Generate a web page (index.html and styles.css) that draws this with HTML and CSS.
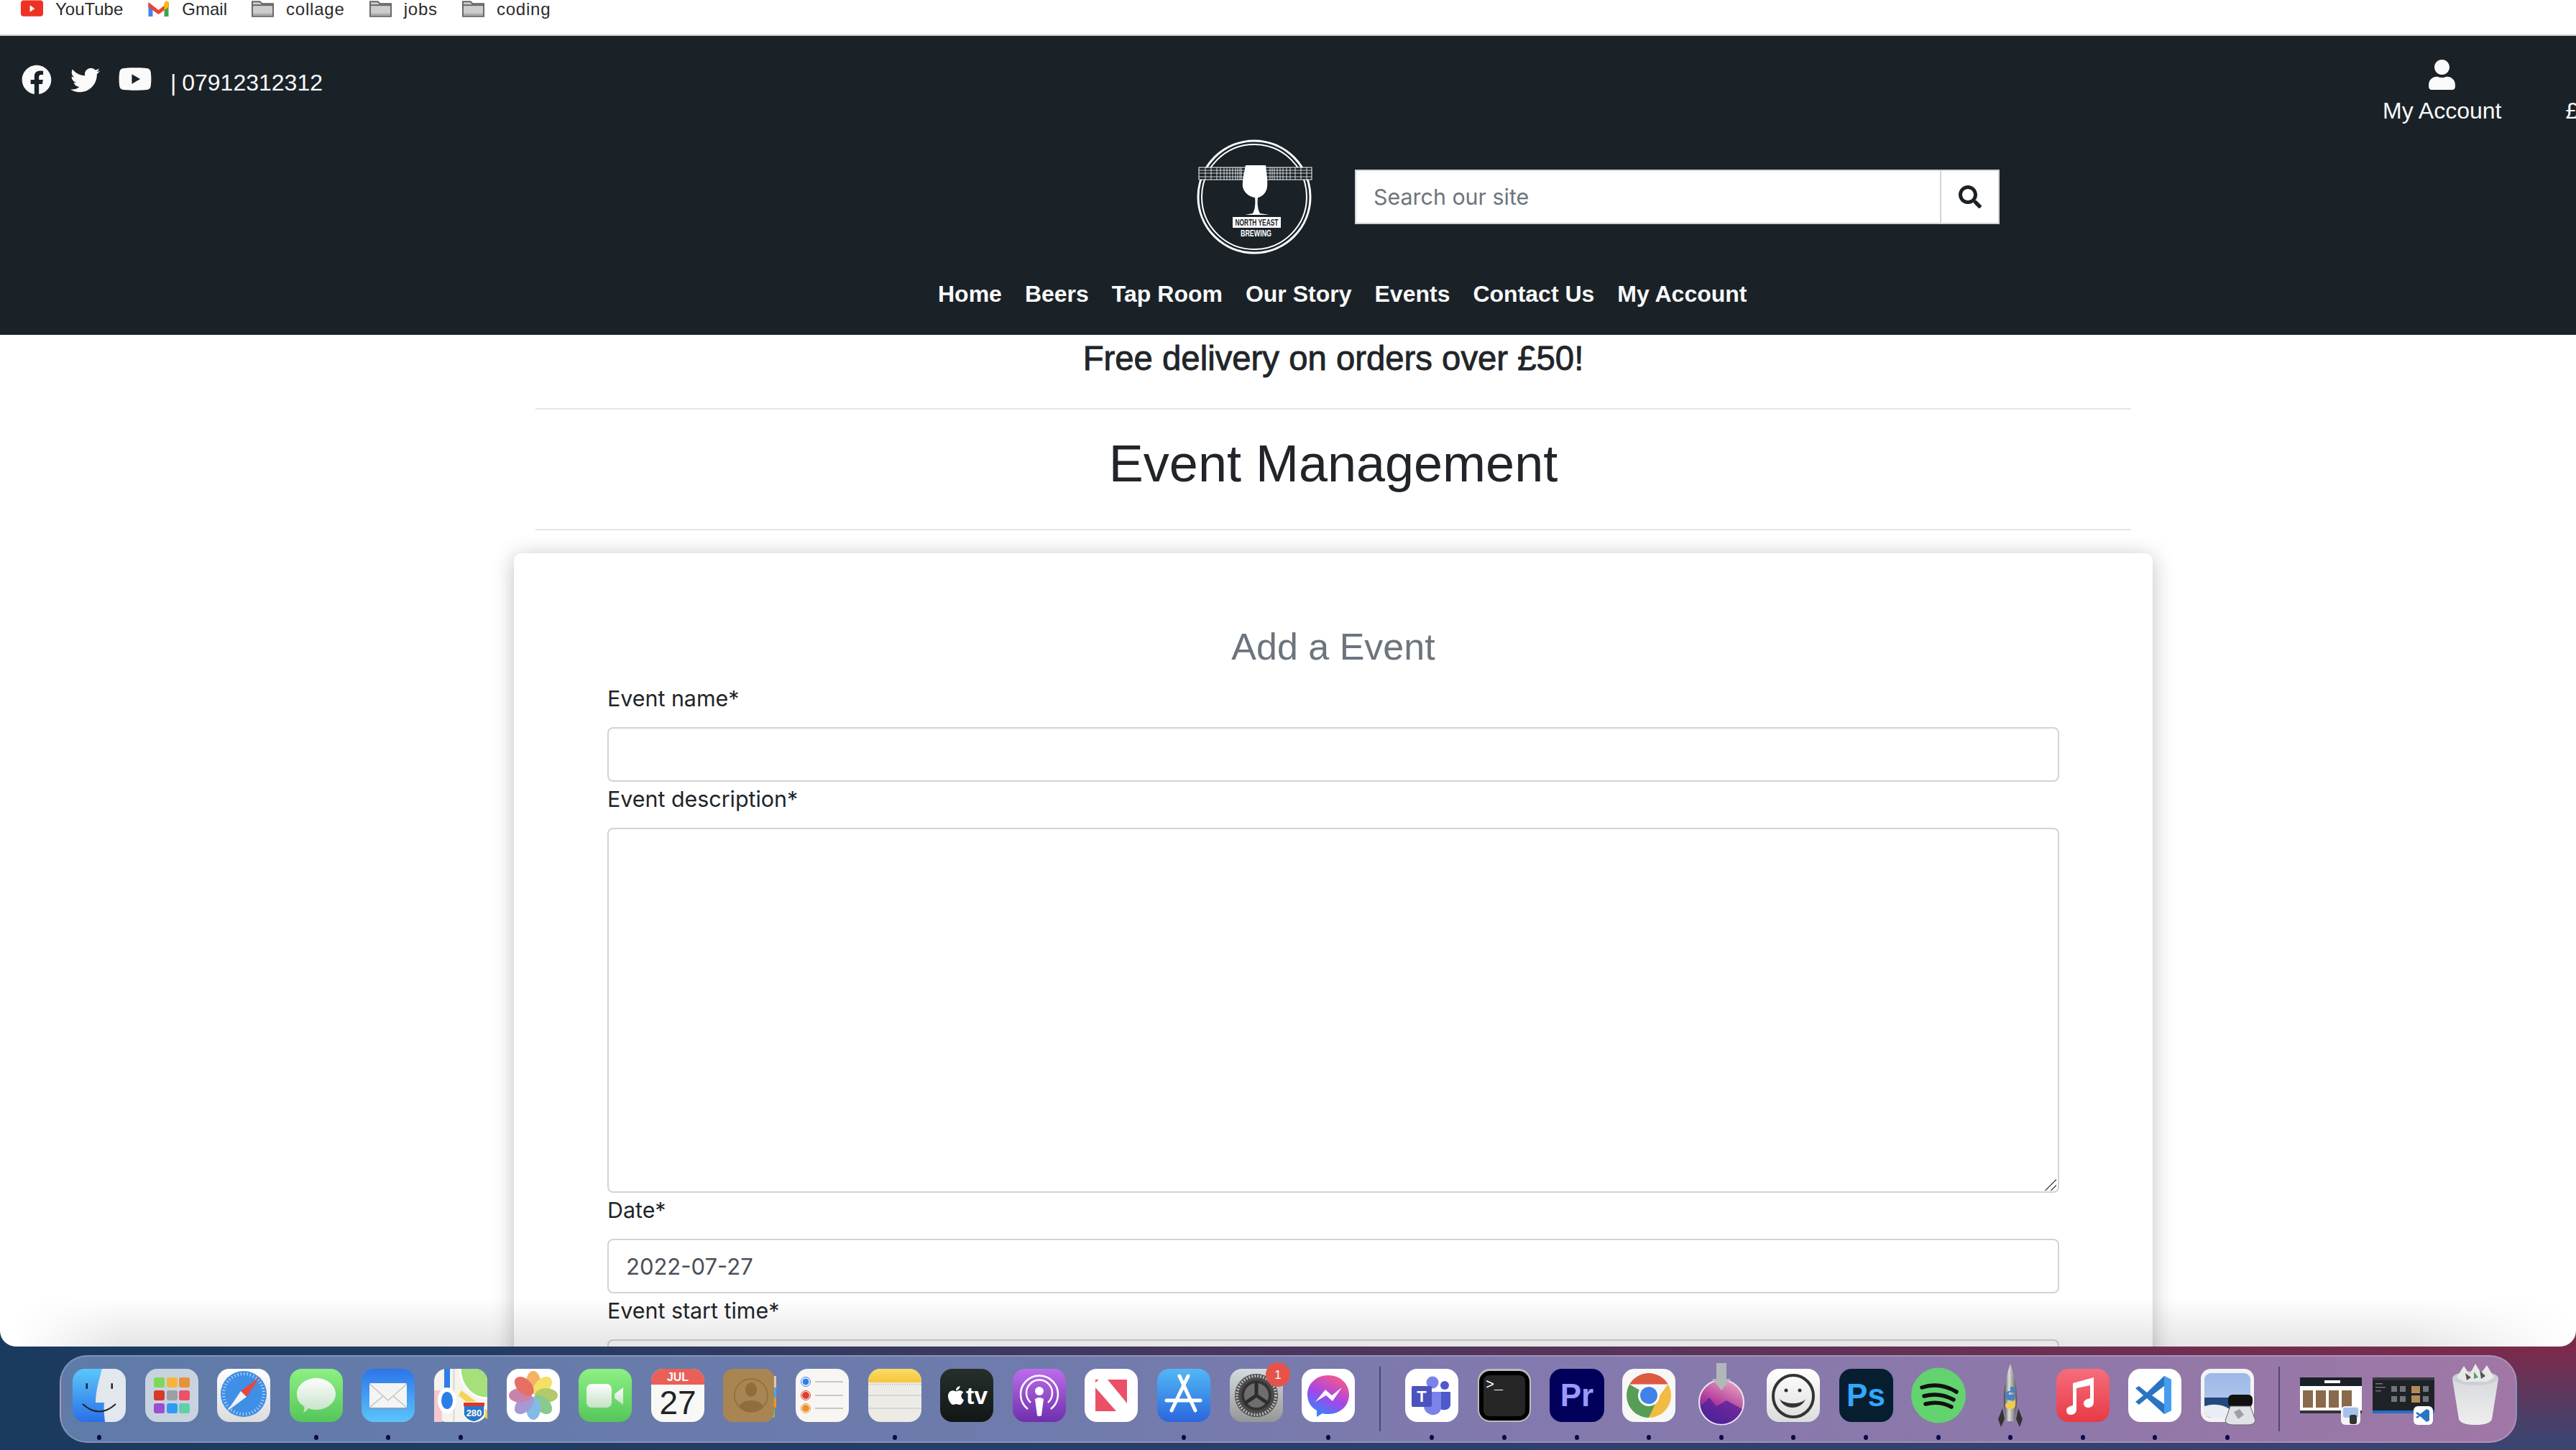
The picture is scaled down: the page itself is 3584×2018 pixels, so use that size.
FILE: index.html
```html
<!DOCTYPE html>
<html lang="en">
<head>
  <meta charset="UTF-8">
  <meta name="viewport" content="width=device-width, initial-scale=1.0">
  <title>Event Management</title>
  <link rel="stylesheet" href="styles.css">
</head>
<body>
  <svg class="svg-defs" aria-hidden="true">
    <defs>
      <linearGradient id="g-finder" x1="0" y1="0" x2="0" y2="1"><stop offset="0" stop-color="#5ac8fa"/><stop offset="1" stop-color="#2a6fe8"/></linearGradient>
      <linearGradient id="g-green" x1="0" y1="0" x2="0" y2="1"><stop offset="0" stop-color="#8df082"/><stop offset="1" stop-color="#55c65a"/></linearGradient>
      <linearGradient id="g-bubble" x1="0" y1="0" x2="0" y2="1"><stop offset="0" stop-color="#fdfdfd"/><stop offset="1" stop-color="#c4e2c6"/></linearGradient>
      <linearGradient id="g-mail" x1="0" y1="0" x2="0" y2="1"><stop offset="0" stop-color="#2d74ea"/><stop offset="1" stop-color="#5bc5fa"/></linearGradient>
      <linearGradient id="g-silver" x1="0" y1="0" x2="0" y2="1"><stop offset="0" stop-color="#fff"/><stop offset="1" stop-color="#dcdcdc"/></linearGradient>
      <linearGradient id="g-tv" x1="0" y1="0" x2="0" y2="1"><stop offset="0" stop-color="#262f2c"/><stop offset="1" stop-color="#121716"/></linearGradient>
      <linearGradient id="g-pod" x1="0" y1="0" x2="0" y2="1"><stop offset="0" stop-color="#bb6dea"/><stop offset="1" stop-color="#6f2fae"/></linearGradient>
      <linearGradient id="g-store" x1="0" y1="0" x2="0" y2="1"><stop offset="0" stop-color="#52b8f5"/><stop offset="1" stop-color="#2a66dc"/></linearGradient>
      <linearGradient id="g-prefs" x1="0" y1="0" x2="0" y2="1"><stop offset="0" stop-color="#d4dcde"/><stop offset="1" stop-color="#969696"/></linearGradient>
      <linearGradient id="g-msgr" x1="0.7" y1="0" x2="0.2" y2="1"><stop offset="0" stop-color="#f7598a"/><stop offset="0.5" stop-color="#a546e8"/><stop offset="1" stop-color="#2a8cff"/></linearGradient>
      <linearGradient id="g-mont" x1="0.7" y1="0" x2="0.2" y2="1"><stop offset="0" stop-color="#e6a0c0"/><stop offset="0.55" stop-color="#b0389a"/><stop offset="1" stop-color="#3a2a9c"/></linearGradient>
      <linearGradient id="g-music" x1="0" y1="0" x2="0" y2="1"><stop offset="0" stop-color="#f76d7c"/><stop offset="1" stop-color="#e73a46"/></linearGradient>
      <linearGradient id="g-rocket" x1="0" y1="0" x2="1" y2="0"><stop offset="0" stop-color="#444"/><stop offset="0.4" stop-color="#ddd"/><stop offset="1" stop-color="#555"/></linearGradient>
      <linearGradient id="g-notes" x1="0" y1="0" x2="0" y2="1"><stop offset="0" stop-color="#fbdc66"/><stop offset="1" stop-color="#f5c63a"/></linearGradient>
      <linearGradient id="g-sky" x1="0" y1="0" x2="0" y2="1"><stop offset="0" stop-color="#9cb8e8"/><stop offset="1" stop-color="#b6cdee"/></linearGradient>
      <linearGradient id="g-trash" x1="0" y1="0" x2="0" y2="1"><stop offset="0" stop-color="#d8dade"/><stop offset="1" stop-color="#eeeeee"/></linearGradient>
    </defs>
  </svg>

  <div class="window">
    <div class="bookmarks">
      <a class="bookmark">
        <svg class="bm-icon" viewBox="0 0 32 24"><rect width="32" height="23" y="0" rx="4" fill="#ee3124"/><path d="M13 7l7 5-7 5z" fill="#fff"/></svg>
        YouTube
      </a>
      <a class="bookmark">
        <svg class="bm-icon" viewBox="0 0 30 24"><path d="M1 4v19h6V10z" fill="#4285f4"/><path d="M29 4v19h-6V10z" fill="#34a853"/><path d="M1 3l14 11L29 3v7L15 20 1 10z" fill="#ea4335"/><path d="M23 4l3-3 3 2v7l-6 4z" fill="#fbbc04"/></svg>
        Gmail
      </a>
      <a class="bookmark folder">
        <svg class="bm-icon" viewBox="0 0 32 24"><path d="M1 23V2h11l3 3h16v18z" fill="#cdcdcd" stroke="#666" stroke-width="2"/><path d="M1 7h30" stroke="#666" stroke-width="2"/><path d="M2 19h28v3H2z" fill="#aaa"/></svg>
        collage
      </a>
      <a class="bookmark folder">
        <svg class="bm-icon" viewBox="0 0 32 24"><path d="M1 23V2h11l3 3h16v18z" fill="#cdcdcd" stroke="#666" stroke-width="2"/><path d="M1 7h30" stroke="#666" stroke-width="2"/><path d="M2 19h28v3H2z" fill="#aaa"/></svg>
        jobs
      </a>
      <a class="bookmark folder">
        <svg class="bm-icon" viewBox="0 0 32 24"><path d="M1 23V2h11l3 3h16v18z" fill="#cdcdcd" stroke="#666" stroke-width="2"/><path d="M1 7h30" stroke="#666" stroke-width="2"/><path d="M2 19h28v3H2z" fill="#aaa"/></svg>
        coding
      </a>
    </div>

    <header class="site-header">
      <div class="header-top">
        <div class="contact">
          <svg class="social fb" viewBox="0 0 512 512"><path d="M504 256C504 119 393 8 256 8S8 119 8 256c0 123.78 90.69 226.38 209.25 245V327.69h-63V256h63v-54.64c0-62.15 37-96.48 93.67-96.48 27.14 0 55.52 4.84 55.52 4.84v61h-31.28c-30.8 0-40.41 19.12-40.41 38.73V256h68.78l-11 71.69h-57.78V501C413.31 482.38 504 379.78 504 256z"/></svg>
          <svg class="social tw" viewBox="0 0 512 512"><path d="M459.37 151.716c.325 4.548.325 9.097.325 13.645 0 138.72-105.583 298.558-298.558 298.558-59.452 0-114.68-17.219-161.137-47.106 8.447.974 16.568 1.299 25.34 1.299 49.055 0 94.213-16.568 130.274-44.832-46.132-.975-84.792-31.188-98.112-72.772 6.498.974 12.995 1.624 19.818 1.624 9.421 0 18.843-1.3 27.614-3.573-48.081-9.747-84.143-51.98-84.143-102.985v-1.299c13.969 7.797 30.214 12.67 47.431 13.319-28.264-18.843-46.781-51.005-46.781-87.391 0-19.492 5.197-37.36 14.294-52.954 51.655 63.675 129.3 105.258 216.365 109.807-1.624-7.797-2.599-15.918-2.599-24.04 0-57.828 46.782-104.934 104.934-104.934 30.213 0 57.502 12.67 76.67 33.137 23.715-4.548 46.456-13.32 66.599-25.34-7.798 24.366-24.366 44.833-46.132 57.827 21.117-2.273 41.584-8.122 60.426-16.243-14.292 20.791-32.161 39.308-52.628 54.253z"/></svg>
          <svg class="social yt" viewBox="0 0 576 512"><path d="M549.655 124.083c-6.281-23.65-24.787-42.276-48.284-48.597C458.781 64 288 64 288 64S117.22 64 74.629 75.486c-23.497 6.322-42.003 24.947-48.284 48.597-11.412 42.867-11.412 132.305-11.412 132.305s0 89.438 11.412 132.305c6.281 23.65 24.787 41.5 48.284 47.821C117.22 448 288 448 288 448s170.78 0 213.371-11.486c23.497-6.321 42.003-24.171 48.284-47.821 11.412-42.867 11.412-132.305 11.412-132.305s0-89.438-11.412-132.305zm-317.51 213.508V175.185l142.739 81.205-142.739 81.201z"/></svg>
          <span class="phone">| 07912312312</span>
        </div>
        <div class="account-links">
          <a class="account">
            <svg class="user-icon" viewBox="0 0 448 512"><path d="M224 256c70.7 0 128-57.3 128-128S294.7 0 224 0 96 57.3 96 128s57.3 128 128 128zm89.6 32h-16.7c-22.2 10.2-46.9 16-72.9 16s-50.6-5.8-72.9-16h-16.7C60.2 288 0 348.2 0 422.4V464c0 26.5 21.5 48 48 48h352c26.5 0 48-21.5 48-48v-41.6c0-74.2-60.2-134.4-134.4-134.4z"/></svg>
            My Account
          </a>
          <span class="basket">£0.00</span>
        </div>
      </div>

      <div class="header-mid">
        <svg class="logo" viewBox="0 0 160 160">
          <circle cx="80" cy="80" r="78" fill="none" stroke="#fff" stroke-width="3"/>
          <circle cx="80" cy="80" r="73" fill="none" stroke="#fff" stroke-width="2"/>
          <rect x="3" y="39" width="157" height="17" fill="#1a2228" stroke="#fff" stroke-width="1"/>
          <path d="M12 39V56M20 39V56M28 39V56M33 39V56M38 39V56M42 39V56M46 39V56M50 39V56M54 39V56M57 39V56M60 39V56M62 39V56M102 39V56M105 39V56M108 39V56M112 39V56M116 39V56M120 39V56M125 39V56M130 39V56M137 39V56M145 39V56M153 39V56M3 43H66M3 47H66M3 52H66M97 43H160M97 47H160M97 52H160" stroke="#fff" stroke-width="0.8" fill="none"/>
          <path d="M68 36H96C97 46 99 56 98 66C97 75 90 80 85 81C84 90 85 98 88 103L101 105H67L78 103C81 98 82 90 81 81C74 80 66 75 64 66C63 56 66 46 68 36Z" fill="#fff"/>
          <rect x="50" y="108" width="67" height="15" fill="#fff"/>
          <text class="logo-name" x="83.5" y="120" text-anchor="middle" textLength="60" lengthAdjust="spacingAndGlyphs">NORTH YEAST</text>
          <text class="logo-sub" x="82.5" y="135" text-anchor="middle" textLength="43" lengthAdjust="spacingAndGlyphs">BREWING</text>
        </svg>
        <form class="search">
          <input class="search-input" type="text" placeholder="Search our site">
          <button class="search-btn" type="button">
            <svg viewBox="0 0 512 512"><path d="M505 442.7L405.3 343c-4.5-4.5-10.6-7-17-7H372c27.6-35.3 44-79.7 44-128C416 93.1 322.9 0 208 0S0 93.1 0 208s93.1 208 208 208c48.3 0 92.7-16.4 128-44v16.3c0 6.4 2.5 12.5 7 17l99.7 99.7c9.4 9.4 24.6 9.4 33.9 0l28.3-28.3c9.4-9.4 9.4-24.6.1-34zM208 336c-70.7 0-128-57.2-128-128 0-70.7 57.2-128 128-128 70.7 0 128 57.2 128 128 0 70.7-57.2 128-128 128z"/></svg>
          </button>
        </form>
      </div>

      <nav class="main-nav">
        <a>Home</a>
        <a>Beers</a>
        <a>Tap Room</a>
        <a>Our Story</a>
        <a>Events</a>
        <a>Contact Us</a>
        <a>My Account</a>
      </nav>
    </header>

    <main class="content">
      <p class="promo">Free delivery on orders over £50!</p>
      <hr class="rule">
      <h1 class="page-title">Event Management</h1>
      <hr class="rule rule-bottom">
      <section class="card">
        <h2 class="card-title">Add a Event</h2>
        <form class="event-form">
          <label class="field-label">Event name*</label>
          <input class="field" type="text">
          <label class="field-label">Event description*</label>
          <textarea class="field field-area"></textarea>
          <label class="field-label">Date*</label>
          <input class="field" type="text" value="2022-07-27">
          <label class="field-label">Event start time*</label>
          <input class="field" type="text">
        </form>
      </section>
    </main>
  </div>

  <div class="dock">
    <div class="dock-item">
      <svg class="app" viewBox="0 0 74 74"><rect width="74" height="74" rx="17" fill="url(#g-finder)"/><path d="M41 0H57A17 17 0 0 1 74 17V57A17 17 0 0 1 57 74H45C44 64 43 56 44 47H32C32 31 37 15 41 0Z" fill="#e3e7ee"/><rect x="18.5" y="20" width="2.5" height="8" rx="1" fill="#222"/><rect x="53.5" y="20" width="2.5" height="8" rx="1" fill="#222"/><path d="M14 49Q37 70 60 49" fill="none" stroke="#222" stroke-width="2"/></svg>
      <span class="dot"></span>
    </div>
    <div class="dock-item">
      <svg class="app" viewBox="0 0 74 74"><rect width="74" height="74" rx="17" fill="#c9d3e0"/>
        <rect x="12" y="12" width="15" height="14" rx="3" fill="#7ed957"/><rect x="30" y="12" width="15" height="14" rx="3" fill="#f5b53a"/><rect x="47" y="12" width="15" height="14" rx="3" fill="#e8913a"/>
        <rect x="12" y="30" width="15" height="14" rx="3" fill="#d8392b"/><rect x="30" y="30" width="15" height="14" rx="3" fill="#9aa0a5"/><rect x="47" y="30" width="15" height="14" rx="3" fill="#ef5068"/>
        <rect x="12" y="48" width="15" height="14" rx="3" fill="#9a4fd0"/><rect x="30" y="48" width="15" height="14" rx="3" fill="#2f9bf5"/><rect x="47" y="48" width="15" height="14" rx="3" fill="#5fd0a8"/>
      </svg>
    </div>
    <div class="dock-item">
      <svg class="app" viewBox="0 0 74 74"><rect width="74" height="74" rx="17" fill="url(#g-silver)"/><circle cx="37" cy="35" r="32" fill="#3f8fe6"/><circle cx="37" cy="35" r="28" fill="none" stroke="#fff" stroke-width="4" stroke-dasharray="1 3.4" opacity="0.8"/><path d="M60 11L33 31 41 39Z" fill="#e8483a"/><path d="M14 59L33 31 41 39Z" fill="#f2f2f2"/></svg>
    </div>
    <div class="dock-item">
      <svg class="app" viewBox="0 0 74 74"><rect width="74" height="74" rx="17" fill="url(#g-green)"/><path d="M37 13C52 13 64 23 64 35C64 47 52 57 37 57C33 57 29 56 26 55C24 58 21 60 19 61C20 58 21 55 20 52C13 48 10 42 10 35C10 23 22 13 37 13Z" fill="url(#g-bubble)"/></svg>
      <span class="dot"></span>
    </div>
    <div class="dock-item">
      <svg class="app" viewBox="0 0 74 74"><rect width="74" height="74" rx="17" fill="url(#g-mail)"/><rect x="11" y="20" width="52" height="34" rx="2" fill="#f4f4f4"/><path d="M11 21L37 44 63 21M11 54L30 38M63 54L44 38" fill="none" stroke="#bcbcbc" stroke-width="1.2"/><rect x="11" y="54" width="52" height="2" fill="#7fa0c8"/></svg>
      <span class="dot"></span>
    </div>
    <div class="dock-item">
      <svg class="app" viewBox="0 0 74 74"><rect width="74" height="74" rx="17" fill="#f5f3ec"/><path d="M36 0H57A17 17 0 0 1 74 17V41C52 41 37 24 36 0Z" fill="#a5e07a"/><path d="M36 0C37 24 52 41 74 41" fill="none" stroke="#fff" stroke-width="3"/><path d="M0 30H11V74H0Z" fill="#f6c7cf"/><path d="M14 0H22V36H14Z" fill="#2b7de9"/><path d="M34 37L74 70V58L38 30Z" fill="#f7d257"/><rect x="26" y="0" width="3" height="74" fill="#e0e0e0"/><ellipse cx="18" cy="44" rx="13" ry="18" fill="#fff"/><ellipse cx="18" cy="44" rx="8" ry="12" fill="#2b7de9"/><path d="M41 47H70V64C66 70 60 73 55.5 74C50 73 44 70 41 64Z" fill="#2a76c9" stroke="#fff" stroke-width="1.5"/><rect x="41" y="47" width="29" height="5" fill="#d8392b"/><text class="map-num" x="55.5" y="66" text-anchor="middle">280</text></svg>
      <span class="dot"></span>
    </div>
    <div class="dock-item">
      <svg class="app" viewBox="0 0 74 74"><rect width="74" height="74" rx="17" fill="#fff"/>
        <g opacity="0.75"><ellipse cx="37" cy="19" rx="10" ry="16" fill="#f4972e"/><ellipse cx="37" cy="19" rx="10" ry="16" fill="#f0d832" transform="rotate(45 37 37)"/><ellipse cx="37" cy="19" rx="10" ry="16" fill="#9ab83a" transform="rotate(90 37 37)"/><ellipse cx="37" cy="19" rx="10" ry="16" fill="#62b86a" transform="rotate(135 37 37)"/><ellipse cx="37" cy="19" rx="10" ry="16" fill="#5aa5e0" transform="rotate(180 37 37)"/><ellipse cx="37" cy="19" rx="10" ry="16" fill="#8a78c8" transform="rotate(225 37 37)"/><ellipse cx="37" cy="19" rx="10" ry="16" fill="#b85a90" transform="rotate(270 37 37)"/><ellipse cx="37" cy="19" rx="10" ry="16" fill="#e0402e" transform="rotate(315 37 37)"/></g>
      </svg>
    </div>
    <div class="dock-item">
      <svg class="app" viewBox="0 0 74 74"><rect width="74" height="74" rx="17" fill="url(#g-green)"/><rect x="11" y="21" width="35" height="33" rx="7" fill="url(#g-bubble)"/><path d="M50 35L62 26V50L50 41Z" fill="url(#g-bubble)"/></svg>
    </div>
    <div class="dock-item">
      <svg class="app" viewBox="0 0 74 74"><rect width="74" height="74" rx="17" fill="#f8f8f6"/><path d="M0 22V17A17 17 0 0 1 17 0H57A17 17 0 0 1 74 17V22Z" fill="#ea5f57"/><text class="cal-month" x="37" y="16.5" text-anchor="middle">JUL</text><text class="cal-day" x="37" y="63" text-anchor="middle">27</text></svg>
    </div>
    <div class="dock-item">
      <svg class="app" viewBox="0 0 74 74"><rect x="60" y="10" width="14" height="16" fill="#d9cdb0"/><rect x="60" y="26" width="14" height="14" fill="#49a6ea"/><rect x="60" y="40" width="14" height="14" fill="#ee9431"/><rect x="60" y="54" width="12" height="14" rx="3" fill="#6ecf68"/><rect width="71" height="74" rx="14" fill="#a98552"/><circle cx="39" cy="37" r="23" fill="none" stroke="#8e6d3f" stroke-width="1.5"/><ellipse cx="39" cy="29" rx="8" ry="10" fill="#8e6d3f"/><path d="M22 53C26 41 52 41 56 53C50 62 28 62 22 53Z" fill="#8e6d3f"/></svg>
    </div>
    <div class="dock-item">
      <svg class="app" viewBox="0 0 74 74"><rect width="74" height="74" rx="17" fill="#f7f6f3"/><circle cx="14" cy="18" r="5" fill="#2f7fe8" stroke="#fff" stroke-width="1"/><circle cx="14" cy="18" r="6.5" fill="none" stroke="#2f7fe8"/><circle cx="14" cy="37" r="5" fill="#e03c30"/><circle cx="14" cy="37" r="6.5" fill="none" stroke="#e03c30"/><circle cx="14" cy="55" r="5" fill="#e8912e"/><circle cx="14" cy="55" r="6.5" fill="none" stroke="#e8912e"/><path d="M27 18H66M27 37H66M27 55H66" stroke="#b8b8b8" stroke-width="1.5"/></svg>
    </div>
    <div class="dock-item">
      <svg class="app" viewBox="0 0 74 74"><rect width="74" height="74" rx="17" fill="#ecebe5"/><path d="M0 19V17A17 17 0 0 1 17 0H57A17 17 0 0 1 74 17V19Z" fill="url(#g-notes)"/><path d="M0 21.5H74" stroke="#a9a9a2" stroke-width="1.5" stroke-dasharray="1 2"/><path d="M0 37H74M0 55H74" stroke="#d2d1cb" stroke-width="1.5"/></svg>
      <span class="dot"></span>
    </div>
    <div class="dock-item">
      <svg class="app" viewBox="0 0 74 74"><rect width="74" height="74" rx="17" fill="url(#g-tv)"/><svg x="10" y="22" width="24" height="30" viewBox="0 0 384 512" fill="#fff"><path d="M318.7 268.7c-.2-36.7 16.4-64.4 50-84.8-18.8-26.9-47.2-41.7-84.7-44.6-35.5-2.8-74.3 20.7-88.5 20.7-15 0-49.4-19.7-76.4-19.7C63.3 141.2 4 184.8 4 273.5q0 39.3 14.4 81.2c12.8 36.7 59 126.7 107.2 125.2 25.2-.6 43-17.9 75.8-17.9 31.8 0 48.3 17.9 76.4 17.9 48.6-.7 90.4-82.5 102.6-119.3-65.2-30.7-61.7-90-61.7-91.9zm-56.6-164.2c27.3-32.4 24.8-61.9 24-72.5-24.1 1.4-52 16.4-67.9 34.9-17.5 19.8-27.8 44.3-25.5 71.9 26.1 2 49.9-11.4 69.4-34.3z"/></svg><text class="tv-text" x="36" y="49">tv</text></svg>
    </div>
    <div class="dock-item">
      <svg class="app" viewBox="0 0 74 74"><rect width="74" height="74" rx="17" fill="url(#g-pod)"/><path d="M21 56A26 26 0 1 1 53 56" fill="none" stroke="#fff" stroke-width="2.5"/><path d="M25 47A18 18 0 1 1 49 47" fill="none" stroke="#fff" stroke-width="2.5"/><circle cx="37" cy="31" r="6" fill="#fff"/><path d="M31 42Q37 38 43 42L40 65Q37 67 34 65Z" fill="#fff"/></svg>
    </div>
    <div class="dock-item">
      <svg class="app" viewBox="0 0 74 74"><rect width="74" height="74" rx="17" fill="#fff"/><rect x="15" y="15" width="44" height="44" fill="#ea5068"/><path d="M15 15H32L59 48V59H44L15 26Z" fill="#fff"/><path d="M15 15H20L15 19Z" fill="#ea5068"/></svg>
    </div>
    <div class="dock-item">
      <svg class="app" viewBox="0 0 74 74"><rect width="74" height="74" rx="17" fill="url(#g-store)"/><path d="M43 10L20 58M31 10L53 58" stroke="#fff" stroke-width="5" stroke-linecap="round"/><path d="M13 44H60" stroke="#fff" stroke-width="5" stroke-linecap="round"/></svg>
      <span class="dot"></span>
    </div>
    <div class="dock-item">
      <svg class="app" viewBox="0 0 74 74"><rect width="74" height="74" rx="17" fill="url(#g-prefs)"/><circle cx="37" cy="37" r="30" fill="#4a4a4a"/><circle cx="37" cy="37" r="27" fill="none" stroke="#bbb" stroke-width="4" stroke-dasharray="2 2"/><circle cx="37" cy="37" r="19" fill="#6e6e6e" stroke="#333" stroke-width="4"/><path d="M37 37V18M37 37L21 48M37 37L53 48" stroke="#2c2c2c" stroke-width="5"/><circle cx="67" cy="8" r="17" fill="#e5534b"/><text class="badge-num" x="67" y="14" text-anchor="middle">1</text></svg>
    </div>
    <div class="dock-item">
      <svg class="app" viewBox="0 0 74 74"><rect width="74" height="74" rx="17" fill="#fff"/><path d="M37 9C54 9 66 21 66 36C66 51 54 63 37 63C34 63 32 63 29 62L21 67V58C12 53 8 45 8 36C8 21 20 9 37 9Z" fill="url(#g-msgr)"/><path d="M19 46L33 29 42 37 56 26 43 45 34 37Z" fill="#fff"/></svg>
      <span class="dot"></span>
    </div>

    <span class="dock-sep"></span>

    <div class="dock-item">
      <svg class="app" viewBox="0 0 74 74"><rect width="74" height="74" rx="17" fill="#fff"/><circle cx="38" cy="19" r="8.5" fill="#7b83eb"/><circle cx="55" cy="23" r="6" fill="#5059c9"/><path d="M47 32H63V50C63 56 55 60 47 55Z" fill="#5059c9"/><path d="M26 32H50V54C50 62 42 65 37 64C31 63 26 58 26 52Z" fill="#7b83eb"/><rect x="9" y="24" width="28" height="29" rx="2" fill="#4b53bc"/><text class="teams-t" x="23" y="46" text-anchor="middle">T</text></svg>
      <span class="dot"></span>
    </div>
    <div class="dock-item">
      <svg class="app" viewBox="0 0 74 74"><rect width="74" height="74" rx="17" fill="#b8bdb8"/><rect x="2" y="3" width="70" height="69" rx="15" fill="#000"/><rect x="8" y="9" width="58" height="57" rx="8" fill="#262626"/><text class="term-text" x="11" y="28">&gt;_</text></svg>
      <span class="dot"></span>
    </div>
    <div class="dock-item">
      <svg class="app" viewBox="0 0 74 74"><rect width="76" height="74" x="-1" rx="17" fill="#00005b"/><text class="pr-text" x="37" y="52" text-anchor="middle">Pr</text></svg>
      <span class="dot"></span>
    </div>
    <div class="dock-item">
      <svg class="app" viewBox="0 0 74 74"><rect width="74" height="74" rx="17" fill="#f7f7f7"/><path d="M10.2 21.5A31 31 0 0 1 63.8 21.5H37Z" fill="#dc5a42"/><path d="M10.2 21.5A31 31 0 0 0 37 68L50 45Z" fill="#569e55"/><path d="M63.8 21.5A31 31 0 0 1 37 68L50 40Z" fill="#f2bb42"/><circle cx="37" cy="37" r="15" fill="#fff"/><circle cx="37" cy="37" r="12" fill="#3f83e8"/></svg>
      <span class="dot"></span>
    </div>
    <div class="dock-item">
      <svg class="app" viewBox="0 0 74 74"><circle cx="37" cy="46.5" r="31" fill="url(#g-mont)" stroke="#e8e8ee" stroke-width="2"/><path d="M8 52L20 40 30 52 44 44 66 56C60 70 48 77 37 77C22 77 12 66 8 52Z" fill="#4a1e9a" opacity="0.7"/><path d="M30 -8H44V14H50L37 30 24 14H30Z" fill="#b0b8b8"/></svg>
      <span class="dot"></span>
    </div>
    <div class="dock-item">
      <svg class="app" viewBox="0 0 74 74"><rect width="74" height="74" rx="17" fill="url(#g-silver)"/><ellipse cx="37" cy="38" rx="28" ry="29" fill="none" stroke="#333" stroke-width="4"/><circle cx="27" cy="30" r="2.5" fill="#333"/><circle cx="46" cy="30" r="2.5" fill="#333"/><path d="M18 42C24 58 48 58 54 42C48 50 26 50 18 42Z" fill="#333"/></svg>
      <span class="dot"></span>
    </div>
    <div class="dock-item">
      <svg class="app" viewBox="0 0 74 74"><rect width="75" height="74" rx="17" fill="#061e30"/><text class="ps-text" x="37" y="52" text-anchor="middle">Ps</text></svg>
      <span class="dot"></span>
    </div>
    <div class="dock-item">
      <svg class="app" viewBox="0 0 74 74"><ellipse cx="37" cy="37" rx="38" ry="38.5" fill="#62d36e"/><path d="M14 26Q38 18 62 32M17 38Q38 32 58 43M19 49Q38 44 55 53" fill="none" stroke="#111" stroke-width="5.5" stroke-linecap="round"/></svg>
      <span class="dot"></span>
    </div>
    <div class="dock-item">
      <svg class="app" viewBox="0 0 74 74"><path d="M26 55L20 70 24 81 29 70ZM48 55L54 70 50 81 45 70Z" fill="#333"/><path d="M37 -7C44 12 47 32 46 50L43 73H31L28 50C27 32 30 12 37 -7Z" fill="url(#g-rocket)"/><path d="M37 25C43 25 44 27 44 33H35V36H44C46 40 42 44 37 44C31 44 30 40 30 36C30 32 33 31 37 31Z" fill="#4a83c0"/><path d="M37 56C43 56 44 53 44 47V38C44 44 42 46 37 46C33 46 30 48 30 51C30 54 33 56 37 56Z" fill="#f0cc4a"/></svg>
      <span class="dot"></span>
    </div>
    <div class="dock-item">
      <svg class="app" viewBox="0 0 74 74"><rect width="74" height="74" rx="17" fill="url(#g-music)"/><path d="M52 12V46C52 52 48 54 44 54C40 54 38 51 38 48C38 44 42 42 47 41V23L28 27V56C28 62 24 64 20 64C16 64 14 61 14 58C14 54 18 52 23 51V20Z" fill="#fff"/></svg>
      <span class="dot"></span>
    </div>
    <div class="dock-item">
      <svg class="app" viewBox="0 0 74 74"><rect width="74" height="74" rx="17" fill="#fff"/><path d="M50 10L60 15V58L50 63L26 41 15 50 10 46 21 37 10 27 15 24 26 33Z" fill="#2b74c4"/><path d="M50 10L60 15V58L50 63Z" fill="#469df0"/><path d="M50 24V49L33 37Z" fill="#fff"/></svg>
      <span class="dot"></span>
    </div>
    <div class="dock-item">
      <svg class="app" viewBox="0 0 74 74"><rect width="74" height="74" rx="14" fill="#f3f3f3"/><rect x="5" y="6" width="64" height="62" rx="9" fill="url(#g-sky)"/><path d="M5 40H69V58Q69 68 59 68H15Q5 68 5 58Z" fill="#24487c"/><path d="M5 52Q25 46 40 56T69 60V62Q69 68 59 68H15Q5 68 5 60Z" fill="#e8eef4"/><rect x="38" y="36" width="34" height="17" rx="6" fill="#111"/><path d="M41 52H69L76 72Q74 78 66 78H44Q36 78 34 72Z" fill="#dfe3e6" stroke="#666"/><path d="M46 60L54 56 60 64 52 70Z" fill="#9aa0a6"/></svg>
      <span class="dot"></span>
    </div>

    <span class="dock-sep"></span>

    <div class="dock-item">
      <svg class="app" viewBox="0 0 74 74"><rect x="-6" y="12" width="86" height="50" fill="#fff"/><rect x="-6" y="12" width="86" height="12" fill="#1a2228"/><rect x="28" y="16" width="22" height="4" fill="#fff"/><g fill="#8a6a4a"><rect x="-2" y="30" width="14" height="24"/><rect x="16" y="30" width="14" height="24"/><rect x="34" y="30" width="14" height="24"/><rect x="52" y="30" width="14" height="24"/></g><rect x="-6" y="58" width="86" height="4" fill="#333"/><rect x="51" y="52" width="27" height="26" rx="6" fill="#f3f3f3"/><rect x="54" y="54" width="21" height="14" rx="3" fill="#a5c0ea"/><rect x="63" y="64" width="10" height="13" rx="3" fill="#333"/></svg>
    </div>
    <div class="dock-item">
      <svg class="app" viewBox="0 0 74 74"><rect x="-6" y="12" width="86" height="50" fill="#1f2226"/><rect x="-6" y="12" width="86" height="4" fill="#33373c"/><g fill="#70757a"><rect x="-2" y="20" width="10" height="1.5"/><rect x="-2" y="25" width="14" height="1.5"/><rect x="-2" y="30" width="8" height="1.5"/><rect x="20" y="24" width="8" height="8"/><rect x="32" y="24" width="8" height="8"/><rect x="20" y="38" width="8" height="8"/><rect x="32" y="38" width="8" height="8"/><rect x="64" y="24" width="8" height="8"/><rect x="64" y="38" width="8" height="8"/></g><g fill="#b48a5a"><rect x="48" y="24" width="12" height="10"/><rect x="48" y="37" width="12" height="10"/></g><rect x="-6" y="58" width="86" height="4" fill="#1f6fc4"/><rect x="51" y="52" width="27" height="26" rx="6" fill="#fff"/><path d="M69 56L73 58V72L69 74 60 66 56 69 54 67 58 65 54 62 56 60 60 63Z" fill="#2b74c4"/></svg>
    </div>
    <div class="dock-item">
      <svg class="app" viewBox="0 0 74 74"><path d="M4 14L13 70Q16 78 36 78Q56 78 59 70L68 14Z" fill="url(#g-trash)"/><ellipse cx="36" cy="13" rx="32" ry="10" fill="#ccd0d4"/><path d="M10 12L20 -4 28 8 36 -7 44 6 52 -5 62 12 52 18H20Z" fill="#e8e8e8"/><path d="M22 6L30 12 24 16ZM42 2L50 10 44 14Z" fill="#555"/><path d="M34 4L40 12 34 14Z" fill="#5a9e6a"/></svg>
    </div>
  </div>
</body>
</html>
```

FILE: styles.css
```css
html, body {
  margin: 0;
  height: 2018px;
  overflow: hidden;
}

body {
  font-family: "Liberation Sans", Arial, sans-serif;
  color: #212529;
  background:
    radial-gradient(ellipse 3000px 130px at 100% 1874px, rgba(128, 40, 72, 0.95), rgba(128, 40, 72, 0)),
    linear-gradient(90deg, #1b3a5f, #2a3f6a 50%, #3d4470);
}

.svg-defs {
  position: absolute;
  width: 0;
  height: 0;
}

.window {
  position: relative;
  height: 1874px;
  background: #fff;
  border-radius: 0 0 22px 22px;
  overflow: hidden;
}

/* dock shadow falling on the window */
.window::after {
  content: "";
  position: absolute;
  left: 0;
  right: 0;
  bottom: 0;
  height: 68px;
  background: linear-gradient(to top, rgba(0, 0, 0, 0.1), rgba(0, 0, 0, 0));
  -webkit-mask-image: linear-gradient(90deg, transparent 20px, #000 170px, #000 3350px, transparent 3584px);
  pointer-events: none;
}

/* browser bookmarks */
.bookmarks {
  display: flex;
  align-items: flex-start;
  gap: 34px;
  height: 48px;
  padding-left: 29px;
  border-bottom: 2px solid #c9cdcf;
  font-size: 24px;
  line-height: 26px;
  color: #2b2b2b;
}

.bookmark {
  display: flex;
  gap: 17px;
}

.folder {
  letter-spacing: 0.8px;
}

.bm-icon {
  width: 31px;
  height: 24px;
}

/* site header */
.site-header {
  background: #1a2228;
  color: #fafafa;
  height: 416px;
  font-size: 32px;
  line-height: 48px;
}

.header-top {
  display: flex;
  justify-content: space-between;
  height: 144px;
}

.contact {
  display: flex;
  align-items: flex-start;
  padding: 40px 0 0 30px;
}

.social {
  fill: #fafafa;
}

.social.fb {
  width: 42px;
  height: 42px;
  margin-right: 26px;
}

.social.tw {
  width: 41px;
  height: 41px;
  margin-top: 1px;
  margin-right: 25px;
}

.social.yt {
  width: 48px;
  height: 42px;
  margin-top: -1px;
  margin-right: 25px;
}

.phone {
  margin-top: -1px;
  padding-top: 2px;
  word-spacing: -1px;
}

.account-links {
  display: flex;
  flex: 0 0 269px;
  min-width: 0;
  gap: 89px;
  padding-top: 33px;
  white-space: nowrap;
}

.account {
  display: flex;
  flex-direction: column;
  align-items: center;
  flex: 0 0 auto;
}

.user-icon {
  width: 37px;
  height: 42px;
  fill: #fafafa;
  margin-bottom: 5px;
}

.basket {
  flex: 0 0 auto;
  margin-top: 47px;
}

.header-mid {
  display: flex;
  align-items: center;
  gap: 60px;
  padding-left: 1665px;
}

.logo {
  width: 160px;
  height: 160px;
  overflow: visible;
}

.logo-name {
  font: bold 13.5px "Liberation Sans", sans-serif;
  fill: #1a2228;
}

.logo-sub {
  font: bold 13px "Liberation Sans", sans-serif;
  fill: #fff;
}

.search {
  display: flex;
  width: 897px;
  height: 76px;
}

.search-input {
  flex: 1;
  box-sizing: border-box;
  min-width: 0;
  padding: 0 24px;
  border: 2px solid #ced4da;
  border-right: none;
  border-radius: 0;
  outline: none;
  font: 30.4px Inter, sans-serif;
  color: #495057;
}

.search-input::placeholder {
  color: #6c757d;
  opacity: 1;
}

.search-btn {
  display: flex;
  align-items: center;
  justify-content: center;
  box-sizing: border-box;
  width: 83px;
  padding: 0;
  background: #fff;
  border: 2px solid #ced4da;
  border-radius: 0;
}

.search-btn svg {
  width: 32px;
  height: 32px;
  fill: #1a2228;
}

.main-nav {
  display: flex;
  gap: 32px;
  margin-top: 31px;
  padding-left: 1305px;
  font-weight: bold;
}

/* page content */
.content {
  width: 2280px;
  margin-left: 715px;
}

.promo {
  margin: 0;
  padding-top: 4px;
  font-size: 47.3px;
  line-height: 58px;
  text-align: center;
  -webkit-text-stroke: 0.9px #212529;
}

.rule {
  height: 2px;
  margin: 40px 30px 0;
  border: none;
  background: rgba(0, 0, 0, 0.1);
}

.rule-bottom {
  margin-top: 48px;
}

.page-title {
  margin: 32px 0 0;
  font-size: 72px;
  font-weight: normal;
  line-height: 86px;
  text-align: center;
}

.card {
  margin-top: 32px;
  padding: 100px 130px 40px;
  background: #fff;
  border-radius: 10px;
  box-shadow: 0 4px 30px rgba(0, 0, 0, 0.25);
}

.card-title {
  margin: 0 0 17px;
  font-size: 52px;
  font-weight: normal;
  line-height: 61px;
  text-align: center;
  color: #6c757d;
}

.event-form {
  font-family: Inter, sans-serif;
}

.field-label {
  display: block;
  margin-bottom: 16px;
  font-size: 30.4px;
  line-height: 48px;
}

.field {
  display: block;
  box-sizing: border-box;
  width: 100%;
  height: 76px;
  padding: 0 24px;
  border: 2px solid #ced4da;
  border-radius: 8px;
  outline: none;
  font: 31px Inter, sans-serif;
  color: #495057;
  background: #fff;
}

.field-area {
  height: 508px;
  resize: none;
  background: #fff linear-gradient(135deg, transparent 47%, #555 47%, #555 54%, transparent 54%, transparent 72%, #555 72%, #555 79%, transparent 79%) no-repeat right 2px bottom 1px / 16px 16px;
}

/* dock */
.dock {
  display: flex;
  align-items: flex-start;
  gap: 26.6px;
  box-sizing: border-box;
  width: 3419px;
  height: 122px;
  margin: 12px 0 0 83px;
  padding: 17px 0 0 16px;
  border: 2px solid rgba(255, 255, 255, 0.2);
  border-radius: 38px;
  background: linear-gradient(90deg, #5f7ba8, #6f7bac 40%, #8379ae 60%, #8d78a9 80%, #a077a6);
}

.dock-item {
  display: flex;
  flex-direction: column;
  align-items: center;
  flex: 0 0 74px;
}

.app {
  display: block;
  width: 74px;
  height: 74px;
  overflow: visible;
}

.dot {
  width: 6px;
  height: 7px;
  margin-top: 18px;
  border-radius: 50%;
  background: #0a0a4a;
}

.dock-sep {
  flex: 0 0 2px;
  height: 90px;
  margin: -3px 7.6px 0;
  background: rgba(50, 50, 100, 0.7);
}

.cal-month {
  font: bold 16px "Liberation Sans", sans-serif;
  fill: #fff;
}

.cal-day {
  font: 46px "Liberation Sans", sans-serif;
  fill: #222;
}

.map-num {
  font: bold 13px "Liberation Sans", sans-serif;
  fill: #fff;
}

.tv-text {
  font: bold 34px "Liberation Sans", sans-serif;
  fill: #fff;
}

.badge-num {
  font: 17px "Liberation Sans", sans-serif;
  fill: #fff;
}

.teams-t {
  font: bold 22px "Liberation Sans", sans-serif;
  fill: #fff;
}

.term-text {
  font: 20px "Liberation Mono", monospace;
  fill: #fff;
}

.pr-text {
  font: bold 44px "Liberation Sans", sans-serif;
  fill: #9999ff;
}

.ps-text {
  font: bold 44px "Liberation Sans", sans-serif;
  fill: #31a8ff;
}
```
